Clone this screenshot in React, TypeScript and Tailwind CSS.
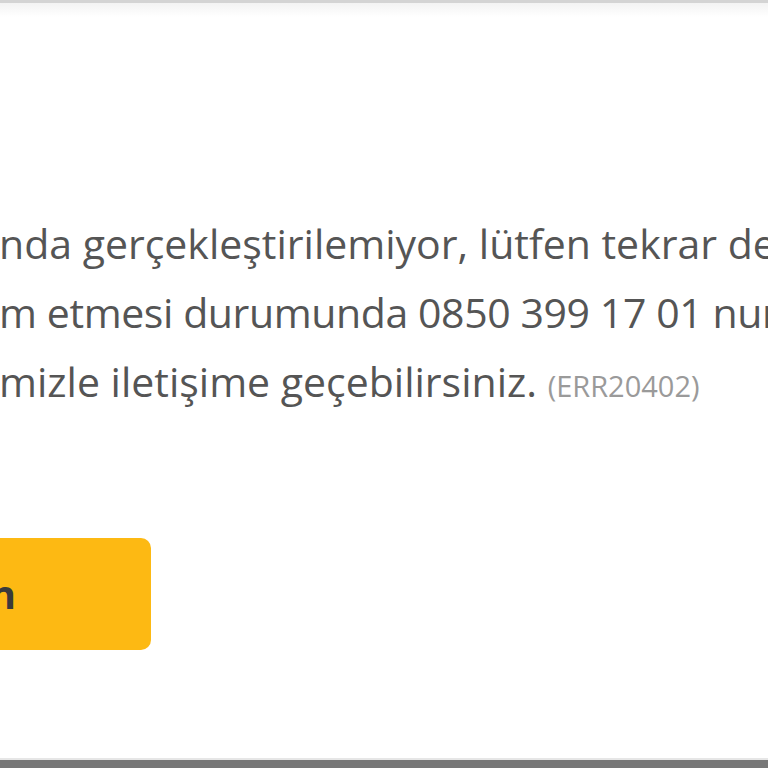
import React from "react";

export default function App() {
  return (
    <div className="w-[768px] h-[768px] overflow-hidden bg-white flex flex-col" style={{ fontFamily: '"Open Sans", "Noto Sans", sans-serif' }}>
      <div className="h-[3px] bg-[#d4d4d4] shrink-0" />
      <div className="h-[14px] bg-gradient-to-b from-[#f3f3f3] to-white shrink-0" />
      <div className="flex-1 flex flex-col pt-[192px]">
        <div className="text-[41px] leading-[69px] text-[#555555] whitespace-nowrap -ml-[1px]">
          <div>nda gerçekleştirilemiyor, lütfen tekrar deneyiniz.</div>
          <div className="tracking-[-0.4px]">m etmesi durumunda 0850 399 17 01 numaralı</div>
          <div>
            mizle iletişime geçebilirsiniz.{" "}
            <span className="text-[29px] text-[#9a9a9a]">(ERR20402)</span>
          </div>
        </div>
        <div className="mt-[118px] flex">
          <div className="h-[112px] w-[500px] -ml-[349px] shrink-0 rounded-[10px] bg-[#fdb913] flex items-center justify-end pr-[135px]">
            <span className="text-[40px] font-bold text-[#3a3a3a] leading-none whitespace-nowrap">Ana Sayfaya Dön</span>
          </div>
        </div>
      </div>
      <div className="h-[2px] bg-[#e6e6e6] shrink-0" />
      <div className="h-[8px] bg-[#777777] shrink-0" />
    </div>
  );
}
